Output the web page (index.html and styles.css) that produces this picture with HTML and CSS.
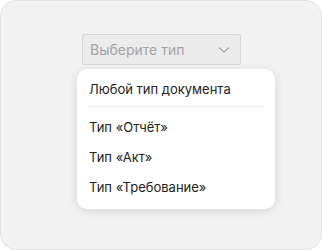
FILE: index.html
```html
<!DOCTYPE html>
<html lang="ru">
<head>
    <meta charset="UTF-8">
    <title>Выбор типа</title>
    <link rel="stylesheet" href="styles.css">
</head>
<body>
    <div class="frame">
        <div class="picker">
            <div class="select">
                <span class="select-label">Выберите тип</span>
                <svg class="chevron" width="12" height="8" viewBox="0 0 12 8">
                    <path d="M1 1.5 L6 6 L11 1.5" fill="none" stroke="#a8a8a8" stroke-width="1.3"/>
                </svg>
            </div>

            <div class="menu">
                <div class="menu-item">Любой тип документа</div>
                <div class="menu-divider"></div>
                <div class="menu-item">Тип «Отчёт»</div>
                <div class="menu-item">Тип «Акт»</div>
                <div class="menu-item">Тип «Требование»</div>
            </div>
        </div>
    </div>
</body>
</html>
```

FILE: styles.css
```css
body {
    margin: 0;
    background: #ffffff;
    font-family: Inter, "Noto Sans", sans-serif;
}
.frame {
    width: 322px;
    height: 250px;
    background: #f2f2f2;
    border: 1px solid #e2e2e2;
    border-radius: 16px;
    padding-top: 33px;
    box-sizing: border-box;
}
.picker {
    position: relative;
    margin-left: 81px;
    width: 159px;
}
.select {
    display: flex;
    align-items: center;
    justify-content: space-between;
    height: 29px;
    padding: 0 10px 0 7px;
    background: #ebebeb;
    border: 1px solid #d6d6d6;
    border-radius: 2px;
}
.select-label {
    font-size: 14px;
    color: #a4a4a4;
}
.chevron {
    display: block;
}
.menu {
    position: absolute;
    left: -5px;
    top: 35px;
    width: 198px;
    padding: 5px 0 7px;
    background: #ffffff;
    border-radius: 10px;
    box-shadow: 0 2px 10px rgba(0, 0, 0, 0.12);
    box-sizing: border-box;
}
.menu-item {
    height: 30px;
    line-height: 30px;
    padding-left: 12px;
    font-size: 13px;
    color: #222222;
}
.menu-divider {
    height: 1px;
    margin: 2px 12px 5px 11px;
    background: #e8e8e8;
}
```
